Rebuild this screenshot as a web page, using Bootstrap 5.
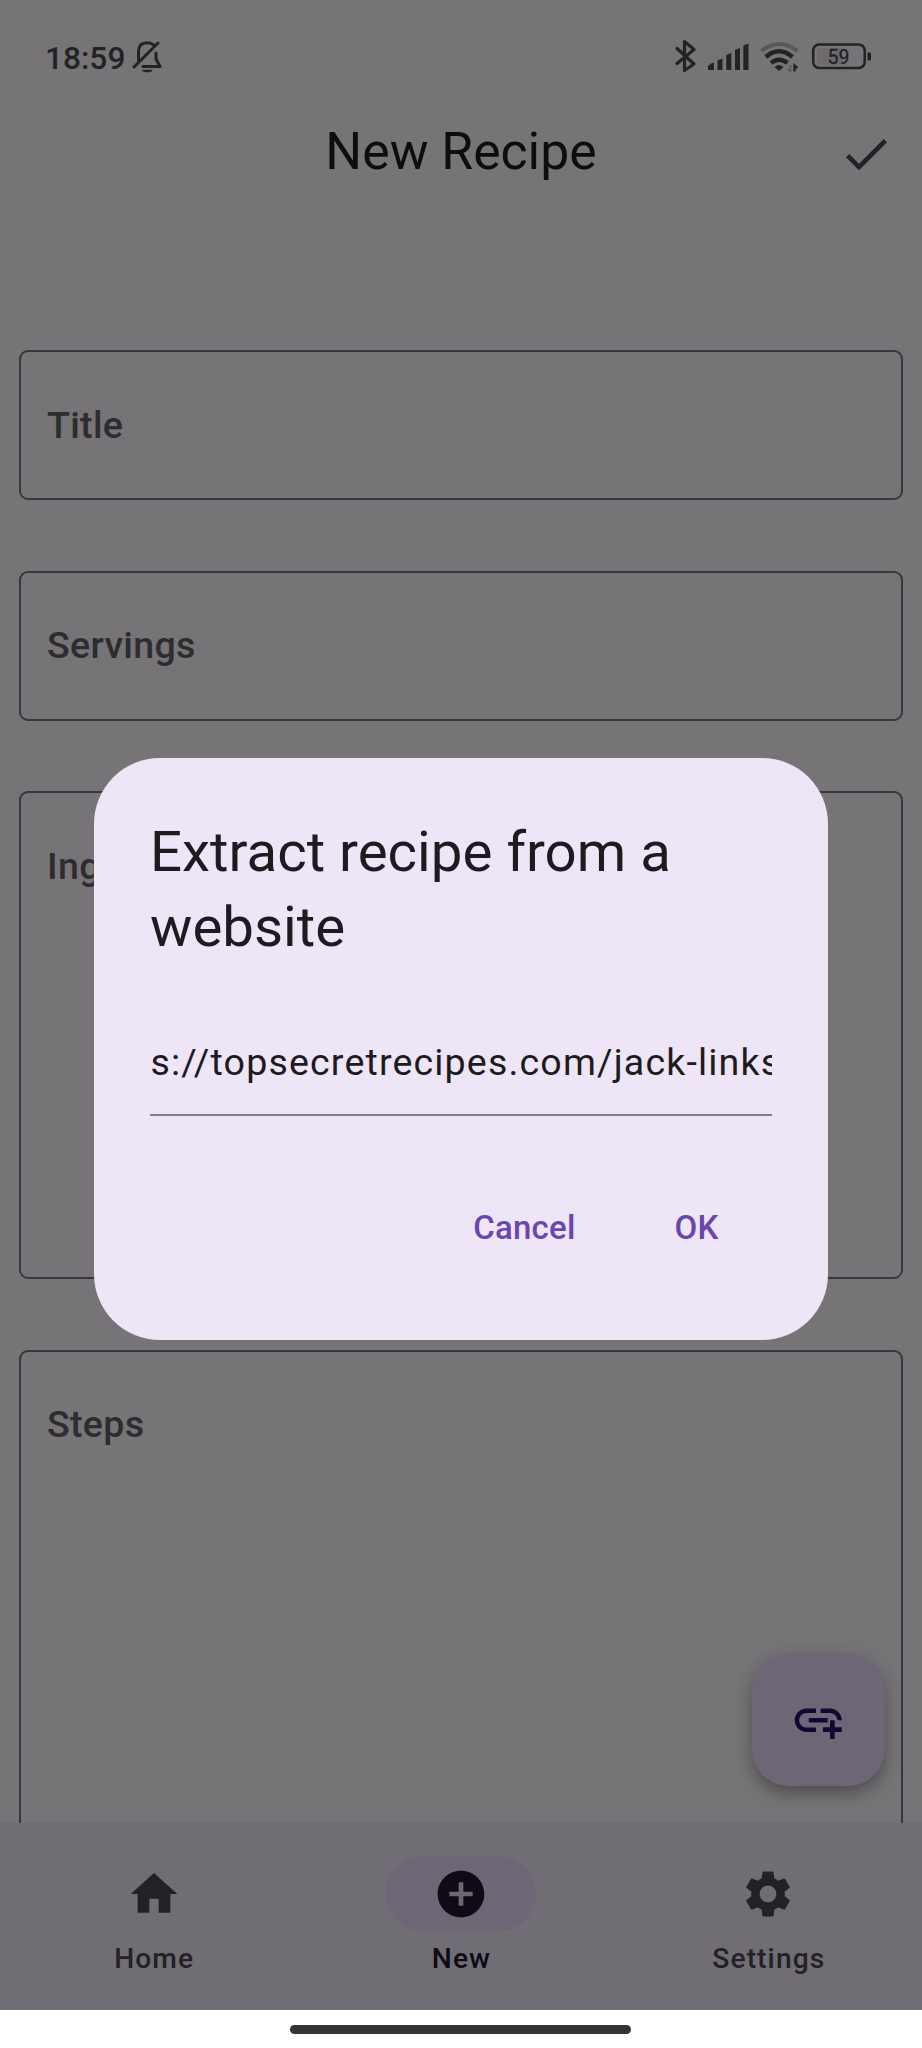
<!DOCTYPE html>
<html lang="en">
<head>
<meta charset="utf-8">
<meta name="viewport" content="width=device-width, initial-scale=1">
<title>New Recipe</title>
<link href="https://cdn.jsdelivr.net/npm/bootstrap@5.3.0/dist/css/bootstrap.min.css" rel="stylesheet">
<style>
  body { font-family: Roboto, "Noto Sans", sans-serif; background: #fff; color: #0d0c0e; }
  svg { display: block; flex: none; }
  .screen { width: 922px; height: 2048px; }
  .app { height: 2010px; background: #767477; }
  .status-bar { height: 84px; padding: 32px 50px 0 45px; color: #232225; }
  .clock { font-size: 31.7px; line-height: 38px; font-weight: 500; margin-top: 8px; }
  .app-bar { height: 136px; }
  .app-title { font-size: 51.7px; line-height: 66px; font-weight: 400; margin-top: 35px; }
  .confirm { right: 28px; top: 42px; color: #222125; }
  .fields { padding: 131px 19px 0; gap: 70.5px; margin-top: 1px; }
  .field-box { flex: none; height: 150px; border: 2px solid #39373b; border-radius: 9px; padding: 50.5px 0 0 26px; font-size: 37.6px; line-height: 44px; font-weight: 500; letter-spacing: .3px; color: #2d2c2e; }
  .field-tall { height: 488px; }
  .fab { right: 37px; bottom: 37px; width: 133px; height: 132px; border: 0; border-radius: 37px; background: #6c6677; color: #150530; box-shadow: 0 9px 16px -2px rgba(50,48,46,.5), 0 2px 16px rgba(60,58,56,.2); }
  .tab-bar { height: 188px; background: #706d74; padding-top: 33px; }
  .tab { font-size: 28.2px; line-height: 38px; font-weight: 500; letter-spacing: 1.1px; color: #232126; gap: 9px; }
  .tab-label { padding-left: 1px; }
  .tab-icon { width: 151px; height: 75px; border-radius: 38px; }
  .tab.active { color: #0e0b14; }
  .tab.active .tab-icon { background: #6c6675; }
  .sheet { left: 94px; top: 758px; width: 734px; height: 582px; border-radius: 66px; background: #eee6f7; padding: 57px 56px 56px; color: #1d1a20; }
  .sheet-title { font-size: 56.4px; line-height: 75.3px; font-weight: 400; margin-bottom: 74px; }
  .url { font-size: 37.6px; line-height: 44px; letter-spacing: 1.15px; height: 76px; padding-left: .5px; border-bottom: 2.4px solid #857b8c; }
  .actions { gap: 99px; margin-top: 93px; padding-right: 53.5px; font-size: 33px; line-height: 38px; font-weight: 500; letter-spacing: .2px; color: #6b45ae; }
  .gesture { width: 341px; height: 9px; background: #333; margin-right: 1px; }
</style>
</head>
<body>
<div class="screen position-relative overflow-hidden d-flex flex-column">
  <div class="app d-flex flex-column">
    <div class="status-bar d-flex justify-content-between">
      <div class="d-flex">
        <span class="clock">18:59</span>
        <svg width="31" height="34" viewBox="131 40 31 34" style="margin:8px 0 0 6px" fill="none" stroke="currentColor" stroke-width="3" stroke-linecap="round" stroke-linejoin="round">
          <path d="M134 67 158 43M138.5 60V52C138.5 45 142 42.8 147 42.8 149.5 42.8 151.5 43.5 153 44.5M156 53V59L160 66.5H143"/><path d="M143 70.5h8.500q-4.250 2.200-8.500 0z" fill="currentColor" stroke-width="1.500"/>
        </svg>
      </div>
      <svg width="200" height="40" viewBox="672 36 200 40" style="margin-top:4px">
        <g fill="none" stroke="currentColor" stroke-width="3.2" stroke-linejoin="round" stroke-linecap="round">
          <path d="M677 48.500 694 64 684.500 70.500V41.500L694 49.500 677 63.500"/>
        </g>
        <g fill="currentColor">
          <path d="M708 70v-4q2-3 6-3.500V70zM717.500 70V60.500L722.500 58.500V70zM726.300 70V55L731.300 53V70zM735 70V50L740 48V70zM743.300 70V45.500L748.500 43.500V70z"/>
          <path d="M779 71l-4.500-4q4.500-4 9 0z"/>
        </g>
        <g fill="none" stroke="currentColor">
          <path d="M761.500 51Q779 37 797.500 51" stroke="#59575a" stroke-width="4"/>
          <path d="M765.800 57Q779 45.500 792.500 57" stroke-width="4.400"/>
          <path d="M771 63Q779 56.500 787.500 63" stroke-width="4.400"/>
          <path d="M790.500 65v6l-3-2" stroke="#59575a" stroke-width="1.800"/>
          <path d="M794.500 71.500V65.500l3 2.500" stroke-width="2.400"/>
          <rect x="813.200" y="44.500" width="51.500" height="23.500" rx="6" stroke-width="2.500"/>
        </g>
        <rect x="817" y="48" width="26" height="16.500" rx="3" fill="#6c6a6d"/>
        <rect x="867.500" y="52.500" width="3.500" height="8" rx="1" fill="currentColor"/>
        <text x="838.500" y="63.500" font-size="19.500" font-weight="400" text-anchor="middle" fill="currentColor" stroke="currentColor" stroke-width=".3">59</text>
      </svg>
    </div>
    <header class="app-bar position-relative d-flex justify-content-center">
      <h1 class="app-title mb-0">New Recipe</h1>
      <svg class="confirm position-absolute" width="56" height="56" viewBox="0 0 24 24" fill="currentColor"><path d="M9 16.170 4.830 12l-1.420 1.410L9 19 21 7l-1.410-1.410z"/></svg>
    </header>
    <main class="position-relative flex-grow-1 overflow-hidden" style="min-height:0">
      <div class="fields d-flex flex-column">
        <div class="field-box">Title</div>
        <div class="field-box">Servings</div>
        <div class="field-box field-tall">Ingredients</div>
        <div class="field-box field-tall">Steps</div>
      </div>
      <button class="fab position-absolute d-flex align-items-center justify-content-center p-0" aria-label="Add link">
        <svg width="56.500" height="56.500" viewBox="0 0 24 24" fill="currentColor"><path d="M8 11h8v2H8zm12.100 1H22c0-2.760-2.240-5-5-5h-4v1.900h4c1.710 0 3.100 1.390 3.100 3.100zM3.900 12c0-1.710 1.390-3.100 3.100-3.100h4V7H7c-2.760 0-5 2.240-5 5s2.240 5 5 5h4v-1.900H7c-1.710 0-3.100-1.390-3.100-3.100zM19 12h-2v3h-3v2h3v3h2v-3h3v-2h-3z"/></svg>
      </button>
    </main>
    <nav class="tab-bar row g-0 flex-nowrap">
      <div class="tab col d-flex flex-column align-items-center">
        <span class="tab-icon d-flex align-items-center justify-content-center"><svg width="56" height="56" viewBox="0 0 24 24" fill="currentColor"><path d="M10 20v-6h4v6h5v-8h3L12 3 2 12h3v8z"/></svg></span>
        <span class="tab-label">Home</span>
      </div>
      <div class="tab active col d-flex flex-column align-items-center">
        <span class="tab-icon d-flex align-items-center justify-content-center"><svg width="56" height="56" viewBox="0 0 24 24" fill="currentColor"><path d="M12 2C6.480 2 2 6.480 2 12s4.480 10 10 10 10-4.480 10-10S17.520 2 12 2zm5 11h-4v4h-2v-4H7v-2h4V7h2v4h4v2z"/></svg></span>
        <span class="tab-label">New</span>
      </div>
      <div class="tab col d-flex flex-column align-items-center">
        <span class="tab-icon d-flex align-items-center justify-content-center"><svg width="56" height="56" viewBox="0 0 24 24" fill="currentColor"><path d="M19.140 12.940c.04-.3.060-.610.060-.940 0-.320-.020-.640-.070-.940l2.030-1.580c.180-.140.230-.410.120-.610l-1.920-3.320c-.120-.220-.370-.290-.590-.220l-2.390.960c-.5-.380-1.030-.7-1.620-.940l-.360-2.540c-.040-.240-.240-.410-.480-.410h-3.840c-.240 0-.430.170-.470.410l-.360 2.540c-.590.240-1.130.570-1.620.940l-2.390-.960c-.220-.080-.470 0-.590.220L2.740 8.870c-.120.210-.080.470.120.610l2.030 1.580c-.050.3-.090.630-.090.940s.020.640.070.940l-2.030 1.580c-.180.140-.230.410-.120.610l1.920 3.320c.120.220.370.290.590.220l2.390-.960c.5.380 1.030.7 1.620.940l.360 2.540c.050.240.240.410.480.410h3.840c.240 0 .440-.170.470-.410l.360-2.540c.590-.240 1.130-.560 1.620-.940l2.390.960c.220.080.470 0 .590-.220l1.920-3.320c.120-.220.070-.470-.120-.610zM12 15.600A3.600 3.600 0 1 1 12 8.400a3.600 3.600 0 0 1 0 7.200z"/></svg></span>
        <span class="tab-label">Settings</span>
      </div>
    </nav>
  </div>
  <div class="flex-grow-1 d-flex justify-content-center" style="padding-top:15px"><div class="gesture rounded-pill"></div></div>

  <section class="sheet position-absolute" role="dialog" aria-label="Extract recipe from a website">
    <h2 class="sheet-title">Extract recipe from a website</h2>
    <div class="url overflow-hidden text-nowrap">s://topsecretrecipes.com/jack-links</div>
    <div class="actions d-flex justify-content-end"><span>Cancel</span><span>OK</span></div>
  </section>
</div>
<script src="https://cdn.jsdelivr.net/npm/bootstrap@5.3.0/dist/js/bootstrap.bundle.min.js"></script>
</body>
</html>
